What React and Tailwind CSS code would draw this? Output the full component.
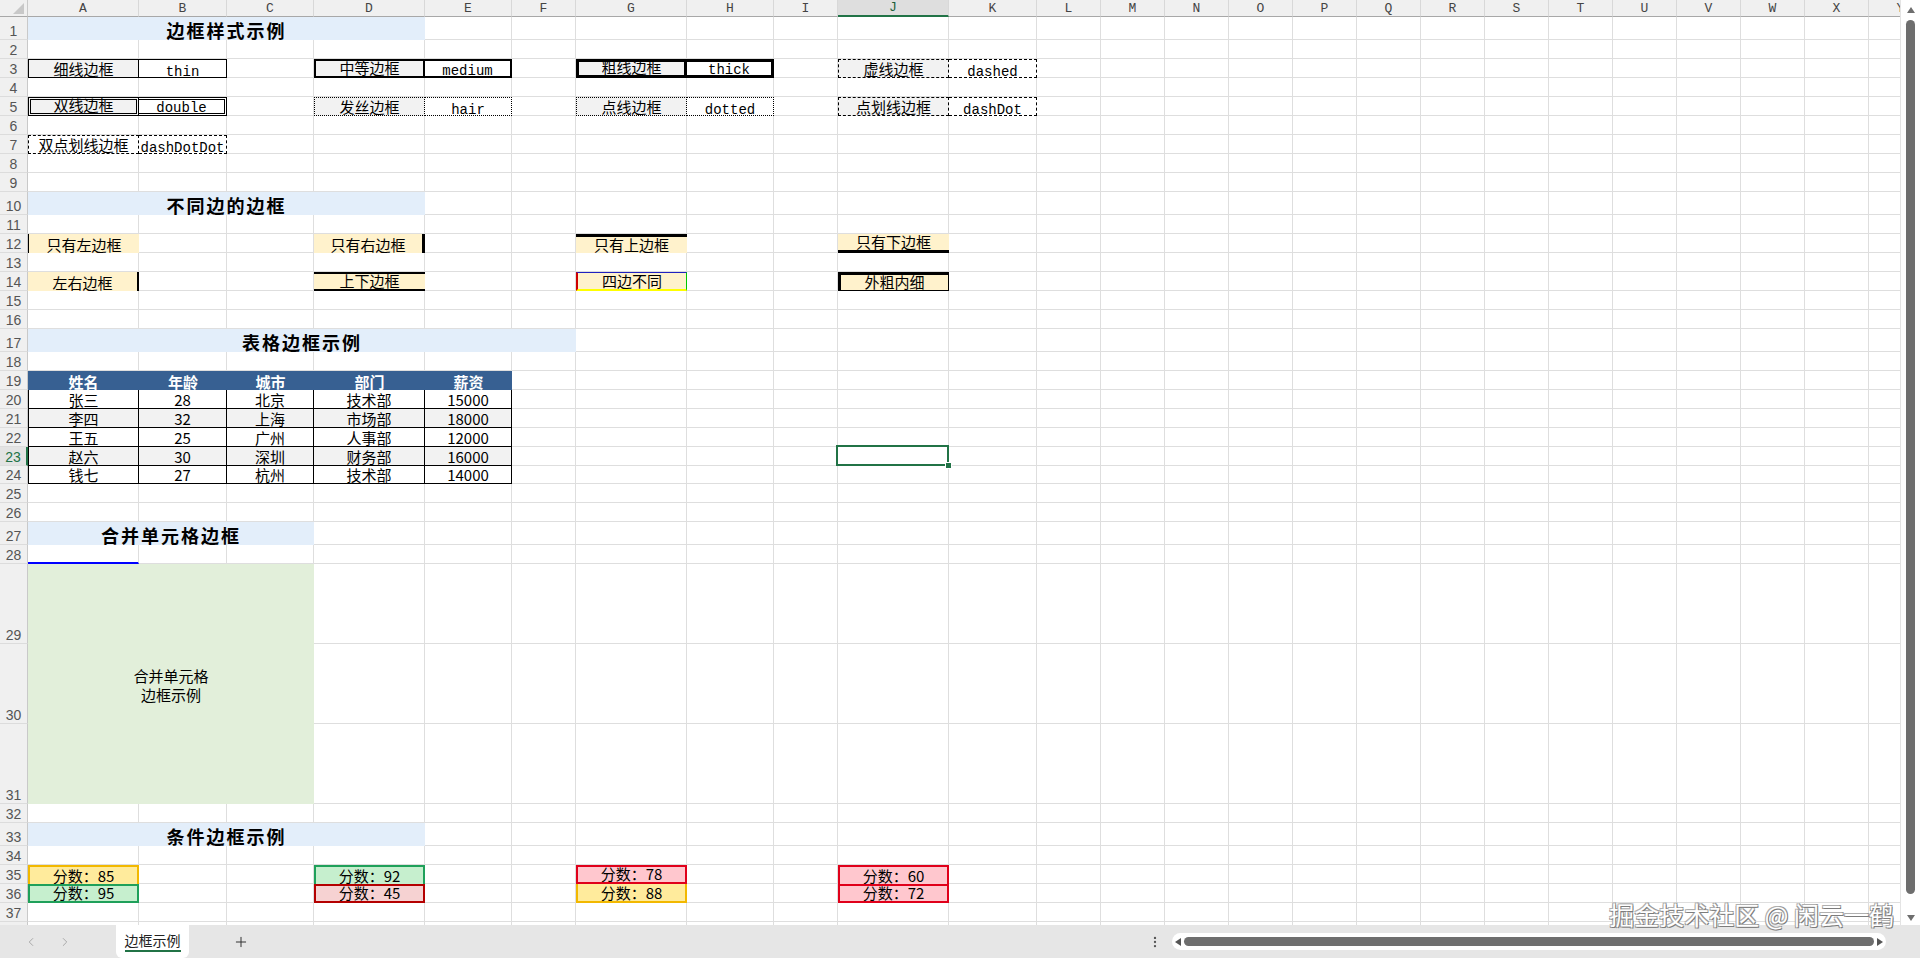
import React from 'react';
import { ChevronLeft, ChevronRight, Plus, EllipsisVertical } from 'lucide-react';

const COLS = [
  ['A', 'w-[111px]'], ['B', 'w-[88px]'], ['C', 'w-[87px]'], ['D', 'w-[111px]'], ['E', 'w-[87px]'],
  ['F', 'w-[64px]'], ['G', 'w-[111px]'], ['H', 'w-[87px]'], ['I', 'w-[64px]'], ['J', 'w-[111px]'],
  ['K', 'w-[88px]'], ['L', 'w-[64px]'], ['M', 'w-[64px]'], ['N', 'w-[64px]'], ['O', 'w-[64px]'],
  ['P', 'w-[64px]'], ['Q', 'w-[64px]'], ['R', 'w-[64px]'], ['S', 'w-[64px]'], ['T', 'w-[64px]'],
  ['U', 'w-[64px]'], ['V', 'w-[64px]'], ['W', 'w-[64px]'], ['X', 'w-[64px]'], ['Y', 'w-[64px]'],
];

const ROW_H = {
  1: 'h-[23.4px]', 10: 'h-[23.4px]', 17: 'h-[23px]', 27: 'h-[22.7px]', 33: 'h-[23.4px]',
  29: 'h-[80px]', 30: 'h-[80px]', 31: 'h-[80px]',
};
const NORMAL_H = 'h-[18.95px]';

// shared cell looks
const TITLE = 'bg-[#e3eefa] font-bold text-[18px] tracking-[2px]';
const GRAY = 'bg-[#f2f2f2]';
const YEL = 'bg-[#fff2cc]';
const HEAD = 'bg-[#376092] text-white font-bold';
const MONO = "font-['Liberation_Mono',monospace] text-[14px] leading-[8px]";
const CJK = 'text-[15px] leading-none';

const CELLS = {
  A1: { span: 4, w: 'w-[397px]', t: '边框样式示例', c: TITLE },

  A3: { t: '细线边框', c: `${GRAY} border border-black` },
  B3: { m: 1, t: 'thin', c: 'border border-l-0 border-black' },
  D3: { t: '中等边框', c: `${GRAY} border-2 border-black` },
  E3: { m: 1, t: 'medium', c: 'border-2 border-l-0 border-black' },
  G3: { t: '粗线边框', c: `${GRAY} border-[3px] border-black` },
  H3: { m: 1, t: 'thick', c: 'border-[3px] border-l-0 border-black' },
  J3: { t: '虚线边框', c: `${GRAY} border border-dashed border-black` },
  K3: { m: 1, t: 'dashed', c: 'border border-l-0 border-dashed border-black' },

  A5: { t: '双线边框', c: `${GRAY} border-[3px] border-double border-black` },
  B5: { m: 1, t: 'double', c: 'border-[3px] border-l-0 border-double border-black' },
  D5: { t: '发丝边框', c: `${GRAY} border border-dotted border-black` },
  E5: { m: 1, t: 'hair', c: 'border border-l-0 border-dotted border-black' },
  G5: { t: '点线边框', c: `${GRAY} border border-dotted border-black` },
  H5: { m: 1, t: 'dotted', c: 'border border-l-0 border-dotted border-black' },
  J5: { t: '点划线边框', c: `${GRAY} border border-dashed border-black` },
  K5: { m: 1, t: 'dashDot', c: 'border border-l-0 border-dashed border-black' },

  A7: { t: '双点划线边框', c: 'border border-dashed border-black' },
  B7: { m: 1, t: 'dashDotDot', c: 'border border-l-0 border-dashed border-black' },

  A10: { span: 4, w: 'w-[397px]', t: '不同边的边框', c: TITLE },

  A12: { t: '只有左边框', c: `${YEL} border-l border-black` },
  D12: { t: '只有右边框', c: `${YEL} border-r-[3px] border-black` },
  G12: { t: '只有上边框', c: `${YEL} border-t-[3px] border-black` },
  J12: { t: '只有下边框', c: `${YEL} border-b-[3px] border-black` },

  A14: { t: '左右边框', c: `${YEL} border-r-2 border-black` },
  D14: { t: '上下边框', c: `${YEL} border-y-2 border-black` },
  G14: {
    t: '四边不同',
    c: `${YEL} border-t border-l-2 border-b-2 border-r border-t-[#2020c0] border-l-[#d00000] border-b-[#ffff00] border-r-[#00c800]`,
  },
  J14: { t: '外粗内细', c: `${YEL} border-t-[3px] border-l-[3px] border-r border-b border-black` },

  A17: { span: 6, w: 'w-[548px]', t: '表格边框示例', c: TITLE },

  A19: { t: '姓名', c: HEAD },
  B19: { t: '年龄', c: HEAD },
  C19: { t: '城市', c: HEAD },
  D19: { t: '部门', c: HEAD },
  E19: { t: '薪资', c: HEAD },

  J23: { sel: true },

  A27: { span: 3, w: 'w-[286px]', t: '合并单元格边框', c: TITLE },
  A28: { t: '', c: 'border-r border-r-[#dedede] border-b-2 border-b-[#0000ff]' },

  A33: { span: 4, w: 'w-[397px]', t: '条件边框示例', c: TITLE },

  A35: { t: '分数：85', c: 'bg-[#ffeb9c] border-2 border-b-0 border-[#f2b800]' },
  A36: { t: '分数：95', c: 'bg-[#c6efce] border-2 border-[#1fa05a]' },
  D35: { t: '分数：92', c: 'bg-[#c6efce] border-2 border-b-0 border-[#1fa05a]' },
  D36: { t: '分数：45', c: 'bg-[#f6d2d2] border-2 border-[#b40000]' },
  G35: { t: '分数：78', c: 'bg-[#ffc7ce] border-2 border-[#e0001a]' },
  G36: { t: '分数：88', c: 'bg-[#ffeb9c] border-2 border-t-0 border-[#f2b800]' },
  J35: { t: '分数：60', c: 'bg-[#ffc7ce] border-2 border-b-0 border-[#e0001a]' },
  J36: { t: '分数：72', c: 'bg-[#ffc7ce] border-2 border-[#e0001a]' },
};

const PEOPLE = [
  ['张三', '28', '北京', '技术部', '15000'],
  ['李四', '32', '上海', '市场部', '18000'],
  ['王五', '25', '广州', '人事部', '12000'],
  ['赵六', '30', '深圳', '财务部', '16000'],
  ['钱七', '27', '杭州', '技术部', '14000'],
];
PEOPLE.forEach((p, i) => {
  const r = 20 + i;
  const fill = i % 2 === 1 ? GRAY : '';
  p.forEach((v, j) => {
    const edge = j === 0 ? 'border-l border-r border-b border-black' : 'border-r border-b border-black';
    CELLS[COLS[j][0] + r] = { t: v, c: `${fill} ${edge}` };
  });
});

function RowHead({ r, h }) {
  const active = r === 23;
  return (
    <div
      className={`w-[28px] ${h} shrink-0 flex items-end justify-center pb-[1px] border-b border-b-[#dcdcdc] font-['Liberation_Sans',sans-serif] text-[14px] leading-none ${
        active
          ? 'bg-[#e3e3e3] text-[#217346] border-r-2 border-r-[#217346]'
          : 'bg-[#f0f0f0] text-[#555] border-r border-r-[#c9c9c9]'
      }`}
    >
      {r}
    </div>
  );
}

function Cells({ r, from = 0 }) {
  const h = ROW_H[r] || NORMAL_H;
  const out = [];
  for (let i = from; i < COLS.length; i++) {
    const [l, w] = COLS[i];
    const c = CELLS[l + r];
    if (c && c.sel) {
      out.push(
        <div key={l} className={`${w} ${h} shrink-0 relative border-r border-b border-[#dedede]`}>
          <div className="absolute -left-[2px] -top-[2px] -right-px -bottom-px border-2 border-[#217346]" />
          <div className="absolute -right-[4px] -bottom-[4px] w-[7px] h-[7px] bg-[#217346] border border-white" />
        </div>
      );
    } else if (c) {
      out.push(
        <div
          key={l}
          className={`${c.w || w} ${h} shrink-0 flex items-end justify-center pb-[1px] whitespace-nowrap ${c.m ? MONO : CJK} ${c.c}`}
        >
          {c.t}
        </div>
      );
      i += (c.span || 1) - 1;
    } else {
      out.push(<div key={l} className={`${w} ${h} shrink-0 border-r border-b border-[#dedede]`} />);
    }
  }
  return out;
}

function Row({ r }) {
  const h = ROW_H[r] || NORMAL_H;
  return (
    <div className="flex shrink-0">
      <RowHead r={r} h={h} />
      <Cells r={r} />
    </div>
  );
}

function ColumnHeader() {
  return (
    <div className="flex h-[17px] shrink-0">
      <div className="w-[28px] shrink-0 bg-[#f0f0f0] border-r border-r-[#c9c9c9] border-b border-b-[#a8a8a8]">
        <svg width="27" height="16" viewBox="0 0 27 16">
          <polygon points="24,3 24,14 13,14" fill="#c8c8c8" />
        </svg>
      </div>
      {COLS.map(([l, w]) => (
        <div
          key={l}
          className={`${w} shrink-0 flex items-center justify-center border-r border-r-[#d8d8d8] font-['Liberation_Mono',monospace] text-[13px] leading-none ${
            l === 'J'
              ? 'bg-[#dedede] text-[#1d5e3a] border-b-2 border-b-[#217346]'
              : 'bg-[#f0f0f0] text-[#444] border-b border-b-[#a8a8a8]'
          }`}
        >
          {l}
        </div>
      ))}
    </div>
  );
}

function VScroll() {
  return (
    <div className="w-[20px] shrink-0 bg-white border-l border-[#e4e4e4] flex flex-col items-center pt-[6px]">
      <svg width="8" height="8" viewBox="0 0 8 8">
        <polygon points="4,1 8,7 0,7" fill="#6e6e6e" />
      </svg>
      <div className="mt-[6px] w-[9px] h-[874px] rounded-full bg-[#6e6e6e]" />
      <svg className="mt-[20px]" width="8" height="8" viewBox="0 0 8 8">
        <polygon points="0,1 8,1 4,7" fill="#6e6e6e" />
      </svg>
    </div>
  );
}

function BottomBar() {
  return (
    <div className="h-[33px] shrink-0 bg-[#e6e6e6] flex items-center">
      <div className="w-[116px] shrink-0 flex items-center gap-[20px] pl-[24px] text-[#a0a0a0]">
        <ChevronLeft size={14} strokeWidth={1.5} />
        <ChevronRight size={14} strokeWidth={1.5} />
      </div>
      <div className="w-[73px] h-full shrink-0 bg-white rounded-b-[6px] flex items-center justify-center">
        <span className="text-[14px] leading-none text-[#222] border-b-2 border-[#217346] pb-[3px] pt-[2px]">边框示例</span>
      </div>
      <div className="ml-[44px] text-[#333]">
        <Plus size={16} strokeWidth={1.5} />
      </div>
      <div className="flex-1" />
      <div className="text-[#555] mr-[10px]">
        <EllipsisVertical size={14} strokeWidth={2} />
      </div>
      <div className="w-[714px] h-[17px] shrink-0 bg-white rounded-full flex items-center gap-[3px] px-[3px] mr-[34px]">
        <svg width="6" height="8" viewBox="0 0 6 8">
          <polygon points="6,0 6,8 0,4" fill="#555" />
        </svg>
        <div className="flex-1 h-[9px] rounded-full bg-[#6e6e6e]" />
        <svg width="6" height="8" viewBox="0 0 6 8">
          <polygon points="0,0 6,4 0,8" fill="#555" />
        </svg>
      </div>
    </div>
  );
}

export default function App() {
  const before = Array.from({ length: 28 }, (_, i) => i + 1);
  const after = Array.from({ length: 7 }, (_, i) => i + 32);
  return (
    <div className="relative w-[1920px] h-[958px] overflow-hidden bg-white text-black font-['Noto_Sans_CJK_SC',sans-serif] flex flex-col">
      <div className="flex h-[925px] shrink-0">
        <div className="w-[1900px] shrink-0 overflow-hidden flex flex-col">
          <ColumnHeader />
          {before.map((r) => (
            <Row key={r} r={r} />
          ))}
          <div className="flex shrink-0">
            <div className="flex flex-col">
              {[29, 30, 31].map((r) => (
                <RowHead key={r} r={r} h="h-[80px]" />
              ))}
            </div>
            <div className="w-[286px] h-[240px] shrink-0 bg-[#e2efda] flex items-center justify-center text-center text-[15px] leading-[19px] pt-[3px]">
              合并单元格
              <br />
              边框示例
            </div>
            <div className="flex flex-col">
              {[29, 30, 31].map((r) => (
                <div key={r} className="flex">
                  <Cells r={r} from={3} />
                </div>
              ))}
            </div>
          </div>
          {after.map((r) => (
            <Row key={r} r={r} />
          ))}
        </div>
        <VScroll />
      </div>
      <BottomBar />
      <div className="absolute right-[26px] top-[902px] text-[25px] leading-none text-white whitespace-nowrap [text-shadow:1px_1px_0_#7c7c7c,-1px_-1px_0_#b0b0b0,1px_-1px_0_#9a9a9a,-1px_1px_0_#9a9a9a]">
        掘金技术社区 @ 闲云一鹤
      </div>
    </div>
  );
}
